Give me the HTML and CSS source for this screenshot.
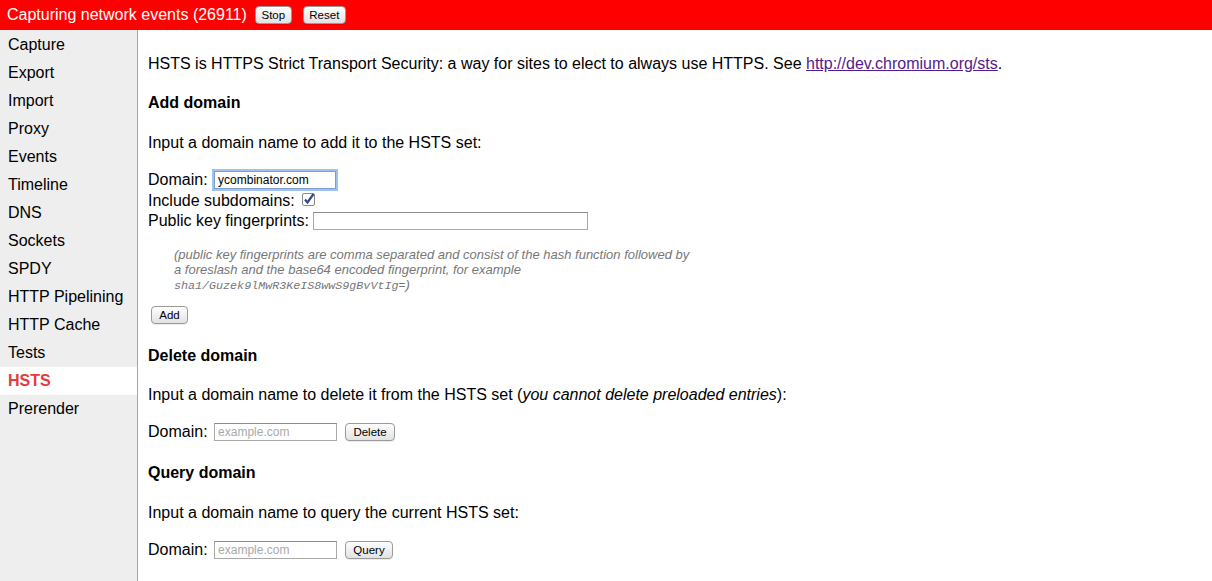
FILE: index.html
```html
<!DOCTYPE html>
<html>
<head>
<meta charset="utf-8">
<link rel="stylesheet" href="styles.css">
</head>
<body>
<div class="topbar">
  <span class="title">Capturing network events (26911)</span>
  <button class="btn btn-stop">Stop</button>
  <button class="btn btn-reset">Reset</button>
</div>
<div class="main">
  <nav class="sidebar">
    <div class="nav-item">Capture</div>
    <div class="nav-item">Export</div>
    <div class="nav-item">Import</div>
    <div class="nav-item">Proxy</div>
    <div class="nav-item">Events</div>
    <div class="nav-item">Timeline</div>
    <div class="nav-item">DNS</div>
    <div class="nav-item">Sockets</div>
    <div class="nav-item">SPDY</div>
    <div class="nav-item">HTTP Pipelining</div>
    <div class="nav-item">HTTP Cache</div>
    <div class="nav-item">Tests</div>
    <div class="nav-item active">HSTS</div>
    <div class="nav-item">Prerender</div>
  </nav>
  <div class="content">
    <p class="intro">HSTS is HTTPS Strict Transport Security: a way for sites to elect to always use HTTPS. See <a class="link" href="#">http://dev.chromium.org/sts</a>.</p>

    <h4 class="heading">Add domain</h4>
    <p class="para">Input a domain name to add it to the HSTS set:</p>
    <div class="form-rows">
      <div class="row">Domain: <span class="field field-focus">ycombinator.com</span></div>
      <div class="row">Include subdomains: <span class="check"><svg width="13" height="13" viewBox="0 0 13 13"><rect x="0.5" y="0.5" width="12" height="12" rx="1.5" fill="#fff" stroke="#8a8a8a"/><path d="M3 6.5 L5.5 9.5 L11.5 1" fill="none" stroke="#2f4a8a" stroke-width="2.2"/></svg></span></div>
      <div class="row">Public key fingerprints: <span class="field field-wide"></span></div>
    </div>
    <div class="note">(public key fingerprints are comma separated and consist of the hash function followed by<br>a foreslash and the base64 encoded fingerprint, for example<br><span class="mono">sha1/Guzek9lMwR3KeIS8wwS9gBvVtIg=</span>)</div>
    <button class="btn btn-add">Add</button>

    <h4 class="heading heading-delete">Delete domain</h4>
    <p class="para para-delete">Input a domain name to delete it from the HSTS set (<i>you cannot delete preloaded entries</i>):</p>
    <div class="row row-single">Domain: <span class="field field-ph">example.com</span><button class="btn btn-delete">Delete</button></div>

    <h4 class="heading heading-query">Query domain</h4>
    <p class="para">Input a domain name to query the current HSTS set:</p>
    <div class="row row-single">Domain: <span class="field field-ph">example.com</span><button class="btn btn-query">Query</button></div>
  </div>
</div>
</body>
</html>
```

FILE: styles.css
```css
html, body {
  margin: 0;
  padding: 0;
  background: #fff;
}
body {
  font-family: "Liberation Sans", Arial, sans-serif;
  font-size: 16px;
  color: #000;
  width: 1212px;
  height: 581px;
  overflow: hidden;
}
.topbar {
  height: 30px;
  background: #ff0000;
  display: flex;
  align-items: center;
  padding-left: 7px;
  box-sizing: border-box;
}
.title {
  color: #fff;
  font-size: 16px;
  margin-right: 8px;
  line-height: 20px;
}
.btn {
  font-family: "Liberation Sans", Arial, sans-serif;
  font-size: 11.5px;
  color: #000;
  height: 18px;
  line-height: 16px;
  padding: 0 4px;
  border: 1px solid #9a9a9a;
  border-radius: 4px;
  background: linear-gradient(#ffffff, #f0f0f0 50%, #e2e2e2);
  box-shadow: 0 1px 0 rgba(0,0,0,0.08);
  box-sizing: border-box;
}
.btn-stop { width: 37px; margin-right: 11px; }
.btn-reset { width: 43px; }
.main {
  display: flex;
  height: 551px;
}
.sidebar {
  width: 137px;
  background: #eeeeee;
  border-right: 1px solid #a6a6a6;
  flex-shrink: 0;
  padding-top: 1px;
}
.nav-item {
  height: 28px;
  line-height: 28px;
  padding-left: 8px;
}
.nav-item.active {
  background: #fff;
  color: #e23c3c;
  font-weight: bold;
}
.content {
  padding: 24px 0 0 10px;
  flex: 1;
}
p, h4 { margin: 0; }
.intro { line-height: 20px; }
.link { color: #551a8b; text-decoration: underline; }
.heading {
  font-size: 16px;
  font-weight: bold;
  line-height: 20px;
  margin-top: 19px;
}
.para {
  line-height: 20px;
  margin-top: 20px;
}
.para-delete { margin-top: 19px; }
.heading-delete { margin-top: 22px; }
.heading-query { margin-top: 21px; }
.form-rows { margin-top: 17px; }
.row {
  height: 20.5px;
  display: flex;
  align-items: center;
  white-space: pre;
}
.row-single { margin-top: 17px; height: 20px; }
.field {
  display: inline-block;
  box-sizing: border-box;
  height: 18px;
  width: 123px;
  border: 1px solid #a9a9a9;
  border-top-color: #8c8c8c;
  background: #fff;
  font-size: 12px;
  line-height: 16px;
  padding-left: 3px;
  color: #000;
}
.field-focus {
  border: 1px solid #7c9ccc;
  box-shadow: 0 0 0 2px #9fc3ec;
  width: 122px;
  margin-left: 2px;
}
.field-wide { width: 275px; }
.field-ph { color: #a9a9a9; margin-left: 2px; }
.check {
  display: inline-flex;
  margin-left: 3px;
  margin-top: -2px;
}
.note {
  margin-top: 15px;
  margin-left: 26px;
  font-size: 13px;
  line-height: 15px;
  font-style: italic;
  color: #777;
}
.mono {
  font-family: "Liberation Mono", "Courier New", monospace;
  font-size: 11.7px;
}
.btn-add {
  display: block;
  margin-top: 12px;
  margin-left: 3px;
  width: 37px;
}
.btn-delete { margin-left: 8px; width: 50px; }
.btn-query { margin-left: 8px; width: 48px; }
```
